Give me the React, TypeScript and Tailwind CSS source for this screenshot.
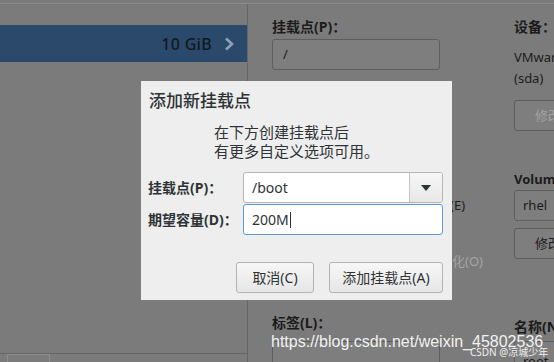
import { RotateCw } from "lucide-react";

const font = { fontFamily: '"Noto Sans", "Noto Sans CJK SC", sans-serif' };

// ─── Background (dimmed installer page) ─────────────

function LeftPanel() {
  return (
    <div className="flex w-[247px] flex-col">
      <div className="mt-[21px] flex h-[37px] items-center justify-end bg-[#2b4a6b] pr-[12px]">
        <span className="text-[16px] font-medium tracking-[0.3px] text-[#121820]">10 GiB</span>
        <svg width="12" height="14" viewBox="0 0 12 14" className="ml-[11px]">
          <path d="M3 1.5 L9 7 L3 12.5" fill="none" stroke="#8da3b8" strokeWidth="2.6" />
        </svg>
      </div>
      <div className="flex-1" />
      <div className="flex h-[19px] border-t border-[#666]">
        <div className="w-[8px] border-r border-[#8e8e8e]" />
        <div className="flex w-[42px] justify-center border-r border-t border-[#8e8e8e] pt-[6px]">
          <RotateCw size={13} strokeWidth={2.6} className="text-[#222]" />
        </div>
      </div>
    </div>
  );
}

function BgBox({ children, w, h = "h-[31px]" }: { children?: React.ReactNode; w: string; h?: string }) {
  return (
    <div className={`${w} ${h} flex shrink-0 items-center rounded-[3px] border border-[#5e5e5e] bg-[#7e7e7e]`}>
      {children}
    </div>
  );
}

function RightPanel() {
  return (
    <div className="grid flex-1 grid-cols-[242px_1fr] pl-[24px]">
      <div className="flex flex-col">
        <div className="mt-[15px] text-[14px] font-bold leading-[16px] text-[#1b1b1b]">挂载点(P)：</div>
        <div className="mt-[4px]">
          <BgBox w="w-[168px]" h="h-[31px]">
            <span className="pl-[10px] text-[13px] text-[#1b1b1b]">/</span>
          </BgBox>
        </div>
        <div className="ml-[152px] mt-[126px] whitespace-nowrap text-[13px] text-[#1b1b1b]">加密(E)</div>
        <div className="ml-[128px] mt-[36px] whitespace-nowrap text-[13px] text-[#a4a4a4]">重新格式化(O)</div>
        <div className="mt-[44px] text-[14px] font-bold leading-[16px] text-[#1b1b1b]">标签(L)：</div>
        <div className="mt-[10px]">
          <BgBox w="w-[168px]" />
        </div>
      </div>
      <div className="flex flex-col overflow-hidden">
        <div className="mt-[15px] whitespace-nowrap text-[14px] font-bold leading-[16px] text-[#1b1b1b]">设备：</div>
        <div className="mt-[12px] whitespace-nowrap text-[13px] leading-[21px] text-[#1b1b1b]">
          VMware Virtual S
          <br />
          (sda)
        </div>
        <div className="mt-[11px]">
          <BgBox w="w-[100px]">
            <span className="whitespace-nowrap pl-[20px] text-[13px] text-[#a2a2a2]">修改...</span>
          </BgBox>
        </div>
        <div className="mt-[40px] whitespace-nowrap text-[13px] font-bold leading-[16px] text-[#1b1b1b]">Volume Group</div>
        <div className="mt-[3px]">
          <BgBox w="w-[100px]">
            <span className="pl-[8px] text-[13px] text-[#1b1b1b]">rhel</span>
          </BgBox>
        </div>
        <div className="mt-[7px]">
          <BgBox w="w-[100px]">
            <span className="whitespace-nowrap pl-[20px] text-[13px] text-[#1b1b1b]">修改...</span>
          </BgBox>
        </div>
        <div className="mt-[60px] whitespace-nowrap text-[14px] font-bold leading-[16px] text-[#1b1b1b]">名称(N)：</div>
        <div className="mt-[6px]">
          <BgBox w="w-[100px]">
            <span className="pl-[8px] pt-[10px] text-[13px] text-[#1b1b1b]">root</span>
          </BgBox>
        </div>
      </div>
    </div>
  );
}

// ─── Dialog ──────────────────────────────────────────

function Button({ label, w }: { label: string; w: string }) {
  return (
    <button
      className={`${w} h-[31px] rounded-[3px] border border-[#b3b3b3] bg-gradient-to-b from-[#f7f7f7] to-[#e6e6e6] text-[14px] text-[#2e3436]`}
    >
      {label}
    </button>
  );
}

function AddMountDialog() {
  return (
    <div className="absolute left-[141px] top-[81px] flex h-[219px] w-[311px] flex-col bg-[#eeeeee] pl-[7px] pr-[9px] pt-[9px]" style={font}>
      <div className="pl-px text-[17px] font-medium leading-[22px] text-[#2e3436]">添加新挂载点</div>
      <div className="ml-[66px] mt-[11px] text-[15px] leading-[19px] text-[#2e3436]">
        在下方创建挂载点后
        <br />
        有更多自定义选项可用。
      </div>
      <div className="mt-[11px] flex items-center">
        <div className="w-[95px] whitespace-nowrap text-[14px] font-bold text-[#2e3436]">挂载点(P)：</div>
        <div className="flex h-[31px] w-[200px] overflow-hidden rounded-[3px] border border-[#b6b6b6] bg-white">
          <div className="flex flex-1 items-center pl-[8px] text-[14px] text-[#2e3436]">/boot</div>
          <div className="flex w-[33px] items-center justify-center border-l border-[#c4c4c4] bg-gradient-to-b from-[#f6f6f6] to-[#e8e8e8]">
            <svg width="10" height="6" viewBox="0 0 10 6">
              <path d="M0 0 H10 L5 6 Z" fill="#2e3436" />
            </svg>
          </div>
        </div>
      </div>
      <div className="mt-px flex items-center">
        <div className="w-[95px] whitespace-nowrap text-[14px] font-bold text-[#2e3436]">期望容量(D)：</div>
        <div className="flex h-[31px] w-[200px] items-center rounded-[3px] border border-[#5d9bd6] bg-white pl-[8px] text-[14px] text-[#2e3436]">
          200M
          <span className="ml-px h-[16px] w-px bg-[#2e3436]" />
        </div>
      </div>
      <div className="mt-[27px] flex justify-end gap-[15px]">
        <Button label="取消(C)" w="w-[78px]" />
        <Button label="添加挂载点(A)" w="w-[114px]" />
      </div>
    </div>
  );
}

export default function App() {
  return (
    <div className="relative flex h-[362px] w-[554px] flex-col overflow-hidden bg-[#7b7b7b]" style={font}>
      <div className="h-[4px] shrink-0 border-b border-[#8a8a8a]" />
      <div className="flex flex-1">
        <LeftPanel />
        <div className="w-px bg-[#666]" />
        <RightPanel />
      </div>
      <AddMountDialog />
      <div
        className="absolute left-[271px] top-[332px] whitespace-nowrap text-[16px] leading-[20px] text-[#f2f2f2]"
        style={{ fontFamily: '"Liberation Sans", sans-serif' }}
      >
        https://blog.csdn.net/weixin_45802536
      </div>
      <div className="absolute left-[470px] top-[346px] whitespace-nowrap text-[10px] leading-[12px] text-[#f0f0f0]">
        CSDN @凉城少年
      </div>
    </div>
  );
}
